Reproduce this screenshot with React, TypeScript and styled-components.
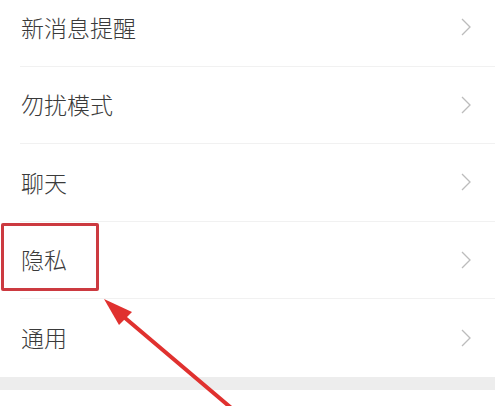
import React from "react";
import styled, { createGlobalStyle } from "styled-components";

const GlobalStyle = createGlobalStyle`
  html, body {
    margin: 0;
    padding: 0;
    background: #ffffff;
    overflow: hidden;
  }
  body {
    font-family: "Noto Sans CJK SC", "Noto Sans", sans-serif;
  }
`;

const items = ["新消息提醒", "勿扰模式", "聊天", "隐私", "通用"];

export default function App() {
  return (
    <Root>
      <GlobalStyle />
      <List>
        {items.map((label, i) => (
          <Row key={label} $last={i === items.length - 1}>
            <Label>{label}</Label>
            <Chevron />
          </Row>
        ))}
      </List>
      <Band />
      <Below />

      <Highlight />
      <Arrow viewBox="0 0 495 406" aria-hidden>
        <line x1="236" y1="412" x2="118" y2="312" stroke="#e0312f" strokeWidth="4" strokeLinecap="round" />
        <polygon points="104,299 132,312 119,325" fill="#e0312f" />
      </Arrow>
    </Root>
  );
}

function Chevron() {
  return (
    <ChevronSvg viewBox="0 0 10 18" width="10" height="18">
      <polyline points="1,1 9,9 1,17" fill="none" stroke="#bcbcbc" strokeWidth="1.3" />
    </ChevronSvg>
  );
}

const Root = styled.div`
  position: relative;
  width: 495px;
  height: 406px;
  overflow: hidden;
  background: #ffffff;
`;

const List = styled.div`
  display: flex;
  flex-direction: column;
  margin-top: -11px;
  padding-left: 20px;
  background: #ffffff;
`;

const Row = styled.div<{ $last: boolean }>`
  box-sizing: border-box;
  height: 77.5px;
  display: flex;
  align-items: center;
  justify-content: space-between;
  padding-right: 24px;
  border-bottom: ${({ $last }) => ($last ? "none" : "1px solid #f1f1f1")};
`;

const Label = styled.span`
  font-size: 23px;
  font-weight: 300;
  color: #3a3a3a;
  line-height: 1;
  padding-left: 1px;
`;

const ChevronSvg = styled.svg`
  display: block;
`;

const Band = styled.div`
  height: 13px;
  background: #ededed;
`;

const Below = styled.div`
  height: 40px;
  background: #ffffff;
`;

const Highlight = styled.div`
  position: absolute;
  left: 1px;
  top: 223px;
  width: 92px;
  height: 62px;
  border: 3px solid #cc3a40;
  border-radius: 2px;
`;

const Arrow = styled.svg`
  position: absolute;
  left: 0;
  top: 0;
  width: 495px;
  height: 406px;
`;
